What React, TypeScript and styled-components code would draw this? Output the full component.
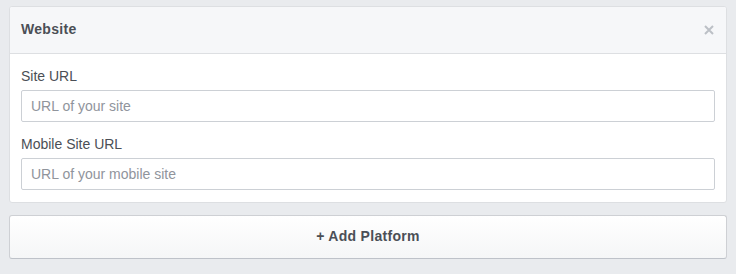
import React from "react";
import styled, { createGlobalStyle } from "styled-components";

const Global = createGlobalStyle`
  html, body { margin: 0; padding: 0; background: #e9ebee; }
  body { font-family: "Liberation Sans", Arial, Helvetica, sans-serif; color: #4b4f56; }
  * { box-sizing: border-box; }
`;

const Page = styled.div`
  padding: 6px 9px 0 9px;
  display: flex;
  flex-direction: column;
  gap: 12px;
`;

const Card = styled.section`
  background: #fff;
  border: 1px solid #dddfe2;
  border-radius: 3px;
  overflow: hidden;
`;

const Header = styled.header`
  height: 47px;
  background: #f6f7f9;
  border-bottom: 1px solid #dddfe2;
  display: flex;
  align-items: center;
  justify-content: space-between;
  padding: 0 12px 2px 11px;
`;

const Title = styled.h2`
  margin: 0;
  font-size: 14px;
  font-weight: bold;
  line-height: 18px;
  letter-spacing: 0.3px;
  color: #4b4f56;
`;

const Close = styled.button`
  border: 0;
  background: none;
  padding: 0;
  width: 10px;
  height: 10px;
  display: flex;
  cursor: pointer;
  margin-top: 2px;
`;

const Body = styled.div`
  padding: 13px 11px 12px 11px;
  display: flex;
  flex-direction: column;
`;

const Field = styled.label<{ $first?: boolean }>`
  display: flex;
  flex-direction: column;
  gap: 5px;
  margin-top: ${(p) => (p.$first ? "0" : "13px")};
`;

const LabelText = styled.span`
  font-size: 14px;
  line-height: 18px;
  color: #4b4f56;
`;

const Input = styled.input`
  height: 32px;
  width: 100%;
  border: 1px solid #ccd0d5;
  border-radius: 2px;
  padding: 0 9px;
  font-family: "Liberation Sans", Arial, Helvetica, sans-serif;
  font-size: 14px;
  color: #1d2129;
  outline: none;
  &::placeholder { color: #90949c; }
`;

const AddButton = styled.button`
  height: 44px;
  width: 100%;
  border: 1px solid #ced0d4;
  border-bottom-color: #bec2c9;
  border-radius: 3px;
  background: linear-gradient(#ffffff, #f5f6f7);
  font-family: "Liberation Sans", Arial, Helvetica, sans-serif;
  font-size: 14px;
  font-weight: bold;
  letter-spacing: 0.3px;
  color: #4b4f56;
  display: flex;
  align-items: center;
  justify-content: center;
  cursor: pointer;
  padding: 0 0 2px 0;
`;

export default function App() {
  return (
    <>
      <Global />
      <Page>
        <Card>
          <Header>
            <Title>Website</Title>
            <Close aria-label="Close">
              <svg width="10" height="10" viewBox="0 0 10 10">
                <path d="M1 1 L9 9 M9 1 L1 9" stroke="#bcc0c6" strokeWidth="2" />
              </svg>
            </Close>
          </Header>
          <Body>
            <Field $first>
              <LabelText>Site URL</LabelText>
              <Input placeholder="URL of your site" />
            </Field>
            <Field>
              <LabelText>Mobile Site URL</LabelText>
              <Input placeholder="URL of your mobile site" />
            </Field>
          </Body>
        </Card>
        <AddButton>+ Add Platform</AddButton>
      </Page>
    </>
  );
}
